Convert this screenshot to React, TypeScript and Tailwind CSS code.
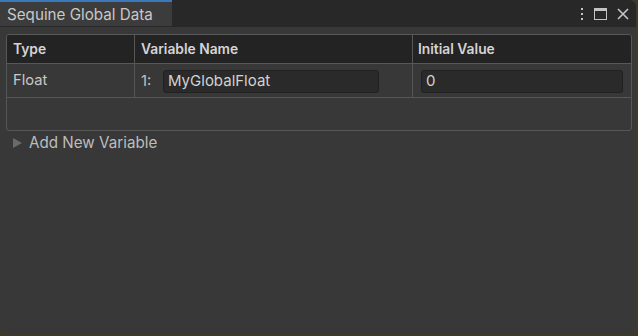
import React from 'react';

const font = { fontFamily: 'Inter, "Noto Sans", sans-serif' };

const TextField: React.FC<{ value: string; className?: string }> = ({ value, className = '' }) => (
  <div
    className={`h-[23px] flex items-center px-[4px] rounded-[3px] bg-[#2a2a2a] border border-[#212121] text-[15px] text-[#d2d2d2] ${className}`}
  >
    {value}
  </div>
);

export default function App() {
  return (
    <div className="w-[638px] h-[336px] bg-[#3d3a2c] overflow-hidden" style={font}>
      <div className="w-[636px] h-[333px] bg-[#383838] rounded-tr-[7px] rounded-b-[6px] overflow-hidden flex flex-col">
        {/* Tab strip */}
        <div className="h-[27px] bg-[#282828] flex items-end justify-between shrink-0">
          <div className="w-[172px] h-[26px] bg-[#3c3c3c] border-t-2 border-[#3a79bb] flex items-center pl-[7px] pt-[2px] text-[15.2px] text-[#c8c8c8] mb-[1px]">
            Sequine Global Data
          </div>
          <div className="flex items-center gap-[10px] h-[26px] pr-[7px] text-[#c4c4c4]">
            <svg width="4" height="12" viewBox="0 0 4 12" fill="currentColor">
              <rect x="1" y="0" width="2" height="2" />
              <rect x="1" y="5" width="2" height="2" />
              <rect x="1" y="10" width="2" height="2" />
            </svg>
            <svg width="13" height="12" viewBox="0 0 13 12" fill="none" stroke="currentColor">
              <rect x="0.5" y="0.5" width="12" height="11" />
              <rect x="0.5" y="0.5" width="12" height="2" fill="currentColor" />
            </svg>
            <svg width="12" height="12" viewBox="0 0 12 12" stroke="currentColor" strokeWidth="1.6">
              <path d="M1 1 L11 11 M11 1 L1 11" />
            </svg>
          </div>
        </div>

        {/* Table */}
        <div className="mt-[7px] mx-[6px] w-[626px] border border-[#575757] rounded-[3px] overflow-hidden">
          <div className="grid grid-cols-[128px_278px_1fr] h-[29px] bg-[#232323] border-b border-[#575757] text-[13.8px] font-semibold text-[#d4d4d4]">
            <div className="flex items-center pl-[6px] pt-[1px] border-r border-[#575757]">Type</div>
            <div className="flex items-center pl-[6px] pt-[1px] border-r border-[#575757]">Variable Name</div>
            <div className="flex items-center pl-[5px] pt-[1px]">Initial Value</div>
          </div>
          <div className="grid grid-cols-[128px_278px_1fr] h-[34px] border-b border-[#575757] text-[14.7px] text-[#c8c8c8]">
            <div className="flex items-center pl-[6px] pb-[1px] border-r border-[#575757]">Float</div>
            <div className="flex items-center pl-[6px] pt-[1px] border-r border-[#575757]">
              <span className="w-[22px] text-[#c0c0c0]">1:</span>
              <TextField value="MyGlobalFloat" className="w-[216px]" />
            </div>
            <div className="flex items-center pl-[8px] pr-[8px] pt-[1px]">
              <TextField value="0" className="w-full" />
            </div>
          </div>
          <div className="h-[32px]" />
        </div>

        {/* Add New Variable */}
        <div className="flex items-center mt-[3px] pl-[13px] h-[18px] text-[15.2px] text-[#bdbdbd]">
          <svg width="9" height="10" viewBox="0 0 9 10" fill="#6a6a6a" className="mr-[7px]">
            <path d="M0 0 L9 5 L0 10 Z" />
          </svg>
          Add New Variable
        </div>
      </div>
    </div>
  );
}
